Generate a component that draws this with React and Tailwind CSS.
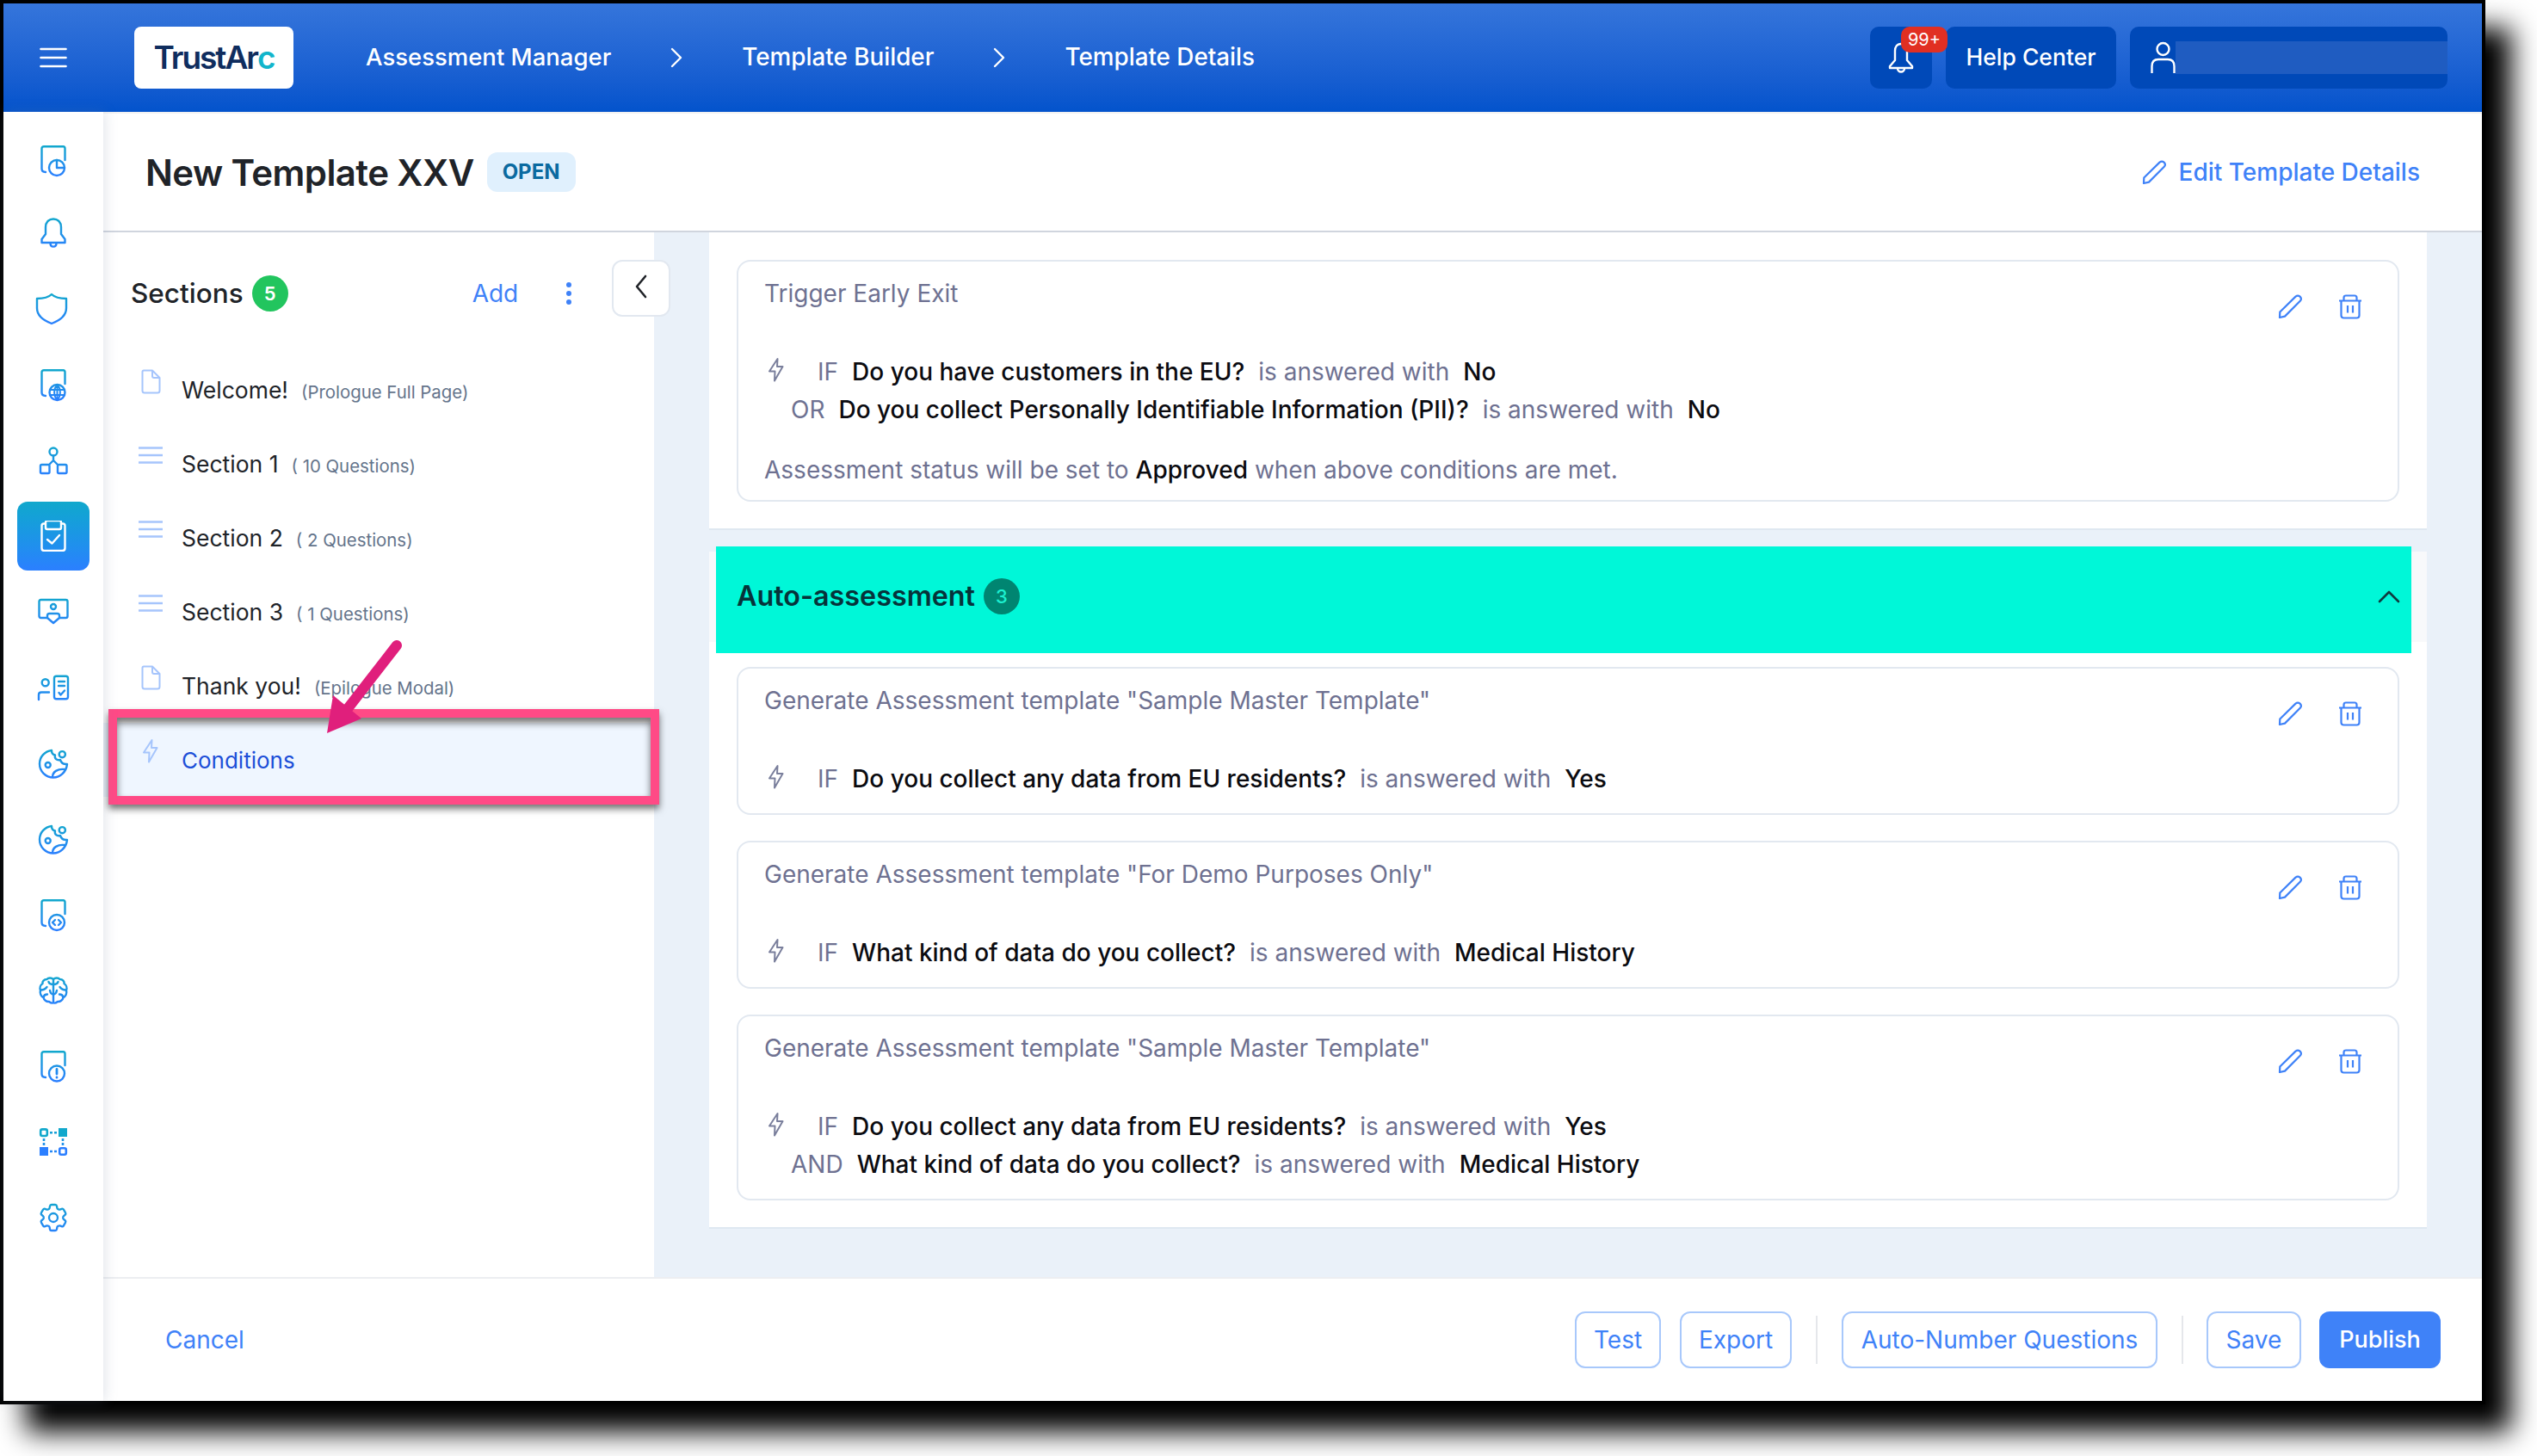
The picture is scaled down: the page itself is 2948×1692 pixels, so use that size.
import React from 'react';
import { HiOutlineCog6Tooth } from 'react-icons/hi2';

const navStroke = { fill: 'none', stroke: 'url(#navGrad)', strokeWidth: 2.4, strokeLinecap: 'round', strokeLinejoin: 'round' };

function NavSvg({ children }) {
  return (
    <svg width="36" height="36" viewBox="0 0 36 36" className="overflow-visible" {...navStroke}>
      {children}
    </svg>
  );
}

const DocBase = () => <path d="M4.5 27V3.5Q4.5 1.2 7 1.2H29.5Q31.5 1.2 31.5 3.5V17M4.5 27Q4.5 31 9 31" />;

const Cookie = () => (
  <NavSvg>
    <path d="M16 3C8 4 2 10.5 2 18.5C2 27.5 9 34.5 18 34.5C26 34.5 33 28 34 19C29 19.5 27 17 26 14C22 15 19 12.5 20 8.5C17 8 16 6 16 3Z" />
    <circle cx="28.3" cy="7.7" r="3.6" />
    <circle cx="11.7" cy="20" r="3" />
    <path d="M17 34C17 28 23 24 31 25" />
  </NavSvg>
);

const brainHalf = (
  <>
    <path d="M18 5C16 3 12 3 10.5 5C7 5 5 7.5 5.5 10C3 11.5 1.8 15 3 18C2 21 3.5 25 6.5 26C7 29 10 31.5 13 31C15 32.5 17 33 18 32" />
    <path d="M18 11C15 11 13 9.5 12.5 8M3.5 17.5C7 17.5 9 16 10.5 14M11 22.5C9 22.5 7 23.5 6.5 26M18 22.5C15.5 22.5 14.5 20.5 14 18" />
  </>
);

const navIcons = [
  <NavSvg key="a"><DocBase /><circle cx="22" cy="26" r="9" /><path d="M22 17V26H31" /></NavSvg>,
  <NavSvg key="b"><path d="M18 1.5C12.5 1.5 9 5.5 9 11V19L4.5 25V29H31.5V25L27 19V11C27 5.5 23.5 1.5 18 1.5Z" /><path d="M14.5 29.5C14.5 35 21.5 35 21.5 29.5" /></NavSvg>,
  <NavSvg key="c"><path d="M16 1C12 5 6 6 -1 6V17C-1 26 8 32 16 35C24 32 33 26 33 17V6C26 6 20 5 16 1Z" /></NavSvg>,
  <NavSvg key="d"><DocBase /><circle cx="22.5" cy="27" r="9" /><path d="M13.8 24H31.2M13.8 30H31.2M22.5 18V36M22.5 18C18 23 18 31 22.5 36C27 31 27 23 22.5 18Z" strokeWidth="2" /></NavSvg>,
  <NavSvg key="e"><circle cx="18" cy="8" r="4.5" /><path d="M18 12.5V18L13 23M18 18L23 23" /><rect x="3" y="23" width="10.5" height="10" rx="1.5" /><rect x="23" y="23" width="10.5" height="10" rx="1.5" /></NavSvg>,
  <svg key="f" width="36" height="36" viewBox="0 0 36 36" fill="none" stroke="#fff" strokeWidth="2.4" strokeLinecap="round" strokeLinejoin="round">
    <path d="M9 3.5H7Q4.5 3.5 4.5 6V32Q4.5 35 7.5 35H28.5Q31.5 35 31.5 32V6Q31.5 3.5 29 3.5H27" />
    <rect x="9" y="0" width="18" height="10" rx="2" />
    <path d="M11 22L16.5 26.5L25 17" />
  </svg>,
  <NavSvg key="g"><path d="M11 25H3.5Q1.5 25 1.5 23V6Q1.5 4 3.5 4H32.5Q34.5 4 34.5 6V23Q34.5 25 32.5 25H25" /><circle cx="18" cy="12" r="3" /><path d="M11 25V22.5Q11 20 13.5 20H22.5Q25 20 25 22.5V25L18 31Z" /></NavSvg>,
  <NavSvg key="h"><circle cx="8.7" cy="12.3" r="4" /><path d="M1 32V26.5Q1 23.5 4 23.5H13" /><rect x="19" y="4.7" width="16" height="26.5" rx="2.5" /><path d="M24 11H31M24 16H31M24.5 24L26.5 26.5L31 21.5" /></NavSvg>,
  <Cookie key="i" />,
  <Cookie key="j" />,
  <NavSvg key="k"><DocBase /><circle cx="22" cy="27" r="9" /><path d="M20 24L17 27L20 30M24 24L27 27L24 30" /></NavSvg>,
  <NavSvg key="l">
    {brainHalf}
    <g transform="translate(36 0) scale(-1 1)">{brainHalf}</g>
    <path d="M18 5V32" />
  </NavSvg>,
  <NavSvg key="m"><DocBase /><circle cx="22" cy="26.5" r="9" /><path d="M22 21.5V27M22 31V31.2" strokeWidth="2.8" /></NavSvg>,
  <svg key="n" width="36" height="36" viewBox="0 0 36 36" fill="none">
    <rect x="3.2" y="3.4" width="7.6" height="7.6" rx="2" stroke="#11a8cc" strokeWidth="2.6" />
    <rect x="24" y="2" width="10" height="10" fill="#11a8cc" />
    <rect x="2" y="24" width="10" height="10" fill="#2b7fff" />
    <rect x="25.2" y="25.2" width="7.6" height="7.6" rx="2" stroke="#2b7fff" strokeWidth="2.6" />
    <path d="M14 7.2H22M7 14V22M29 14V22M14 29H22" stroke="url(#navGrad)" strokeWidth="2.6" strokeDasharray="3 2" />
  </svg>,
  <HiOutlineCog6Tooth key="o" size={40} stroke="url(#navGrad24)" strokeWidth={1.4} />,
];

const PageIcon = () => (
  <svg width="23" height="29" viewBox="0 0 23 29" fill="none" stroke="#a6c5fc" strokeWidth="2" strokeLinejoin="round">
    <path d="M3 1.5H13L21.5 10V25Q21.5 27.5 19 27.5H4Q1.5 27.5 1.5 25V3Q1.5 1.5 3 1.5Z" />
    <path d="M13 1.5V8Q13 10 15 10H21.5" />
  </svg>
);

const LinesIcon = () => (
  <svg width="28" height="20" viewBox="0 0 28 20" fill="none" stroke="#a6c5fc" strokeWidth="2.4">
    <path d="M0 1.5H28M0 10H28M0 18.5H28" />
  </svg>
);

const Bolt = ({ color = '#7a7f9c' }) => (
  <svg width="18" height="28" viewBox="0 0 18 28" fill="none" stroke={color} strokeWidth="2" strokeLinejoin="round" strokeLinecap="round">
    <path d="M10.5 1L1 15.5H7.5L7 26.5L16.5 10H10Z" />
  </svg>
);

const Pencil = ({ color = '#3f82f8' }) => (
  <svg width="29" height="29" viewBox="0 0 29 29" fill="none" stroke={color} strokeWidth="2.2" strokeLinejoin="round">
    <path d="M2 27L2.3 20.5L20.5 2.6Q23 0.6 25.6 2.6Q28 5 26 7.5L8 25.6Z" />
  </svg>
);

const Trash = () => (
  <svg width="28" height="29" viewBox="0 0 28 29" fill="none" stroke="#3f82f8" strokeWidth="2.2" strokeLinejoin="round">
    <path d="M1 7.5H27M6.5 7.5V4Q6.5 1.5 9 1.5H19Q21.5 1.5 21.5 4V7.5" />
    <path d="M3.5 7.5V24.5Q3.5 27.5 6.5 27.5H21.5Q24.5 27.5 24.5 24.5V7.5" />
    <path d="M11 13V21.5M17 13V21.5" />
  </svg>
);

const sections = [
  { icon: <PageIcon />, name: 'Welcome!', note: '(Prologue Full Page)' },
  { icon: <LinesIcon />, name: 'Section 1', note: '( 10 Questions)' },
  { icon: <LinesIcon />, name: 'Section 2', note: '( 2 Questions)' },
  { icon: <LinesIcon />, name: 'Section 3', note: '( 1 Questions)' },
  { icon: <PageIcon />, name: 'Thank you!', note: '(Epilogue Modal)' },
];

function Rule({ lead, question, answer }) {
  return (
    <div className={`flex items-center h-[44px] gap-4 ${lead === 'IF' ? '' : 'pl-[31px]'}`}>
      {lead === 'IF' && (
        <span className="w-[46px] -mt-1 pl-[5px]">
          <Bolt />
        </span>
      )}
      <span className="text-[#6e7191]">{lead}</span>
      <span className="font-medium text-[#0b0b10]">{question}</span>
      <span className="text-[#6e7191]">is answered with</span>
      <span className="font-medium text-[#0b0b10]">{answer}</span>
    </div>
  );
}

function RuleCard({ title, rules, children }) {
  return (
    <div className="flex justify-between border-2 border-[#e2e8f0] rounded-[16px] bg-white pl-[30px] pr-[41px] pt-5 pb-[18px] text-[28px]">
      <div>
        <div className="h-[34px] leading-[34px] text-[#6e7191]">{title}</div>
        <div className="mt-[52px]">
          {rules.map((r) => (
            <Rule key={r.lead + r.question} {...r} />
          ))}
        </div>
        {children}
      </div>
      <div className="flex gap-[41px] pt-[18px]">
        <Pencil />
        <Trash />
      </div>
    </div>
  );
}

const autoCards = [
  {
    title: 'Generate Assessment template "Sample Master Template"',
    rules: [{ lead: 'IF', question: 'Do you collect any data from EU residents?', answer: 'Yes' }],
  },
  {
    title: 'Generate Assessment template "For Demo Purposes Only"',
    rules: [{ lead: 'IF', question: 'What kind of data do you collect?', answer: 'Medical History' }],
  },
  {
    title: 'Generate Assessment template "Sample Master Template"',
    rules: [
      { lead: 'IF', question: 'Do you collect any data from EU residents?', answer: 'Yes' },
      { lead: 'AND', question: 'What kind of data do you collect?', answer: 'Medical History' },
    ],
  },
];

const Crumb = () => (
  <svg width="14" height="24" viewBox="0 0 14 24" fill="none" stroke="#fff" strokeWidth="2.4" strokeLinecap="round" strokeLinejoin="round">
    <path d="M2 2L12 12L2 22" />
  </svg>
);

const outlineBtn = 'h-[66px] flex items-center justify-center border-2 border-[#a8c8fb] rounded-[12px] text-[#3f82f8] text-[28px] bg-white';

export default function App() {
  return (
    <div className="w-[2948px] h-[1692px] bg-white overflow-hidden font-['Inter',sans-serif]">
      <svg className="absolute w-0 h-0">
        <defs>
          <linearGradient id="navGrad" gradientUnits="userSpaceOnUse" x1="0" y1="0" x2="0" y2="36">
            <stop offset="0" stopColor="#11a8cc" />
            <stop offset="1" stopColor="#2b7fff" />
          </linearGradient>
          <linearGradient id="navGrad24" gradientUnits="userSpaceOnUse" x1="0" y1="0" x2="0" y2="24">
            <stop offset="0" stopColor="#11a8cc" />
            <stop offset="1" stopColor="#2b7fff" />
          </linearGradient>
        </defs>
      </svg>

      <div className="w-[2888px] h-[1632px] border-4 border-black flex flex-col bg-white shadow-[30px_32px_30px_#000]">
        {/* Top bar */}
        <header className="h-[126px] shrink-0 flex items-center pl-[42px] pr-[40px] bg-gradient-to-b from-[#3575db] to-[#0353cc] text-white text-[27.8px] font-medium">
          <svg width="32" height="24" viewBox="0 0 32 24" fill="none" stroke="#fff" strokeWidth="2.6" strokeLinecap="round">
            <path d="M1.5 2H30.5M1.5 12H30.5M1.5 22H30.5" />
          </svg>
          <div className="ml-[78px] mr-[84px] w-[185px] h-[72px] bg-white rounded-[8px] flex items-center justify-center text-[37px] font-semibold tracking-[-2px] text-[#0f2d5e]">
            <span>TrustAr</span>
            <span className="text-[#12b5cb]">c</span>
          </div>
          <nav className="flex items-center gap-[69px]">
            <span className="text-[27.5px]">Assessment Manager</span>
            <Crumb />
            <span>Template Builder</span>
            <Crumb />
            <span>Template Details</span>
          </nav>
          <div className="ml-auto flex items-center gap-4">
            <div className="relative w-[72px] h-[72px] rounded-[10px] bg-[#0049b8] flex items-center justify-center">
              <svg width="30" height="38" viewBox="0 0 30 38" fill="none" stroke="#fff" strokeWidth="2.4" strokeLinejoin="round" className="mt-[2px]">
                <path d="M15 2C10 2 8 6 8 10V21L2 28V30H28V28L22 21V10C22 6 20 2 15 2Z" />
                <path d="M11 30.5A4 4 0 0 0 19 30.5" />
              </svg>
              <span className="absolute left-[36px] top-0 w-[54px] h-[30px] rounded-[10px] bg-[#e12f22] text-[20px] leading-[30px] font-normal text-center">99+</span>
            </div>
            <div className="h-[72px] w-[198px] rounded-[10px] bg-[#0049b8] flex items-center justify-center text-[26.5px]">Help Center</div>
            <div className="h-[72px] w-[369px] rounded-[10px] bg-[#0049b8] flex items-center pl-6 overflow-hidden">
              <svg width="29" height="38" viewBox="0 0 29 38" fill="none" stroke="#fff" strokeWidth="2.4">
                <circle cx="14.5" cy="9" r="7" />
                <path d="M1.5 37V29Q1.5 21 9 21H20Q27.5 21 27.5 29V37" />
              </svg>
              <div className="h-[38px] flex-1 bg-[#1f5cc1]" />
            </div>
          </div>
        </header>

        <div className="flex-1 flex min-h-0">
          {/* Icon rail */}
          <aside className="relative z-10 w-[116px] shrink-0 bg-white pt-[13px] flex flex-col items-center shadow-[2px_0_14px_rgba(120,130,160,0.22)]">
            {navIcons.map((icon, i) => (
              <div
                key={i}
                className={`h-[88px] w-full flex items-center justify-center shrink-0 ${i === 0 ? '-mb-1' : ''}`}
              >
                {i === 5 ? (
                  <div className="w-[84px] h-[80px] rounded-[12px] bg-gradient-to-b from-[#11a8cc] to-[#2b7fff] flex items-center justify-center">
                    {icon}
                  </div>
                ) : (
                  icon
                )}
              </div>
            ))}
          </aside>

          <div className="flex-1 flex flex-col min-w-0">
            {/* Title row */}
            <div className="h-[140px] shrink-0 flex items-center border-t-2 border-t-[#f2f2f2] border-b-2 border-b-[#d0d5de] pl-[49px] pr-[72px]">
              <h1 className="text-[42px] font-semibold text-[#202328] tracking-[-0.6px]">New Template XXV</h1>
              <span className="ml-[15px] w-[103px] h-[46px] rounded-[12px] bg-[#e0f0fd] text-[#0a6aa0] text-[24px] font-bold flex items-center justify-center">OPEN</span>
              <div className="ml-auto flex items-center gap-[14px] text-[28px] font-medium text-[#3f82f8]">
                <Pencil />
                <span>Edit Template Details</span>
              </div>
            </div>

            <div className="flex-1 flex min-h-0">
              {/* Sections list */}
              <div className="relative w-[640px] shrink-0 bg-white">
                <div className="h-[140px] flex items-center pl-[32px] pt-[2px]">
                  <span className="text-[31.5px] font-medium text-[#202328]">Sections</span>
                  <span className="ml-[10px] w-[42px] h-[42px] rounded-full bg-[#22c55e] text-white text-[22px] font-semibold flex items-center justify-center">5</span>
                  <span className="ml-[214px] text-[28px] text-[#3f82f8]">Add</span>
                  <svg width="8" height="28" viewBox="0 0 8 28" fill="#3f82f8" className="ml-[55px]">
                    <circle cx="4" cy="4" r="3" />
                    <circle cx="4" cy="14" r="3" />
                    <circle cx="4" cy="24" r="3" />
                  </svg>
                </div>
                <button className="absolute left-[591px] top-[32px] w-[68px] h-[66px] rounded-[12px] border-2 border-[#e2e8f0] bg-white flex items-center justify-center">
                  <svg width="16" height="28" viewBox="0 0 16 28" fill="none" stroke="#202328" strokeWidth="2.6" strokeLinecap="round" strokeLinejoin="round" className="-mt-1">
                    <path d="M13 2L3 14L13 26" />
                  </svg>
                </button>

                {sections.map((s) => (
                  <div key={s.name} className="h-[86px] flex items-center pl-[41px]">
                    <span className="w-[50px] mb-5 flex">
                      <span className="w-[28px] flex justify-center">{s.icon}</span>
                    </span>
                    <span className="flex items-baseline mt-[1px]">
                      <span className="text-[26.5px] text-[#202328]">{s.name}</span>
                      <span className="ml-[15px] text-[20.4px] text-[#64748b]">{s.note}</span>
                    </span>
                  </div>
                ))}
                <div className="h-[86px] flex items-center pl-[41px] bg-[#eff6ff]">
                  <span className="w-[50px] mb-5 flex">
                    <span className="w-[28px] flex justify-center"><Bolt color="#a6c5fc" /></span>
                  </span>
                  <span className="text-[26px] mt-[1px] text-[#1d4fd8]">Conditions</span>
                </div>

                {/* Callout drawn over the list */}
                <div className="absolute left-[6px] top-[554px] w-[640px] h-[111px] border-[10px] border-[#ff4a86] shadow-[0_5px_8px_rgba(0,0,0,0.55),inset_0_6px_8px_rgba(0,0,0,0.55)]" />
                <svg width="120" height="130" viewBox="0 0 120 130" className="absolute left-[240px] top-[465px]" fill="none">
                  <path d="M101 15L35 100" stroke="#e01f7c" strokeWidth="12" strokeLinecap="round" />
                  <path d="M27 73L20 117L60 100Z" fill="#e01f7c" />
                </svg>
              </div>

              {/* Conditions */}
              <div className="flex-1 min-w-0 bg-[#eaf1f9] px-16">
                <section className="bg-white px-8 pt-8 pb-[31px] border-b-2 border-[#dfe8f1]">
                  <RuleCard
                    title="Trigger Early Exit"
                    rules={[
                      { lead: 'IF', question: 'Do you have customers in the EU?', answer: 'No' },
                      { lead: 'OR', question: 'Do you collect Personally Identifiable Information (PII)?', answer: 'No' },
                    ]}
                  >
                    <div className="mt-[31px] h-[34px] leading-[34px] text-[#6e7191]">
                      Assessment status will be set to <span className="font-medium text-[#0b0b10]">Approved</span> when above conditions are met.
                    </div>
                  </RuleCard>
                </section>

                <section className="mt-[25px]">
                  <div className="relative h-[105px] bg-[#f8f9fb]">
                    <div className="absolute left-2 right-[18px] top-[-6px] bottom-[-13px] bg-[#00f7d8] flex items-center pl-6 pr-[13px] pb-[8px] text-[32.3px] font-semibold text-[#06333a]">
                      Auto-assessment
                      <span className="ml-[10px] w-[42px] h-[42px] rounded-full bg-[#008571] text-[#1cf0d0] text-[22px] font-medium flex items-center justify-center">3</span>
                      <svg width="26" height="16" viewBox="0 0 26 16" fill="none" stroke="#0f3b3f" strokeWidth="2.6" strokeLinecap="round" strokeLinejoin="round" className="ml-auto">
                        <path d="M2 14L13 3L24 14" />
                      </svg>
                    </div>
                  </div>
                  <div className="bg-white px-8 pt-[29px] pb-[31px] border-b-2 border-[#dfe8f1] flex flex-col gap-[30px]">
                    {autoCards.map((c, i) => (
                      <RuleCard key={i} title={c.title} rules={c.rules} />
                    ))}
                  </div>
                </section>
              </div>
            </div>

            {/* Footer */}
            <footer className="h-[144px] shrink-0 border-t-2 border-[#eceef1] flex items-center pl-[72px] pr-[48px] text-[28px]">
              <span className="text-[#3f82f8]">Cancel</span>
              <div className="ml-auto flex items-center gap-[22px]">
                <button className={`${outlineBtn} w-[100px]`}>Test</button>
                <button className={`${outlineBtn} w-[130px]`}>Export</button>
                <span className="w-[2px] h-[56px] bg-[#e5e7eb] mx-[6px]" />
                <button className={`${outlineBtn} w-[367px]`}>Auto-Number Questions</button>
                <span className="w-[2px] h-[56px] bg-[#e5e7eb] mx-[5.5px]" />
                <button className={`${outlineBtn} w-[110px]`}>Save</button>
                <button className="-ml-px h-[66px] w-[141px] flex items-center justify-center rounded-[12px] bg-[#3f82f8] text-white text-[27px] font-medium">Publish</button>
              </div>
            </footer>
          </div>
        </div>
      </div>
    </div>
  );
}
